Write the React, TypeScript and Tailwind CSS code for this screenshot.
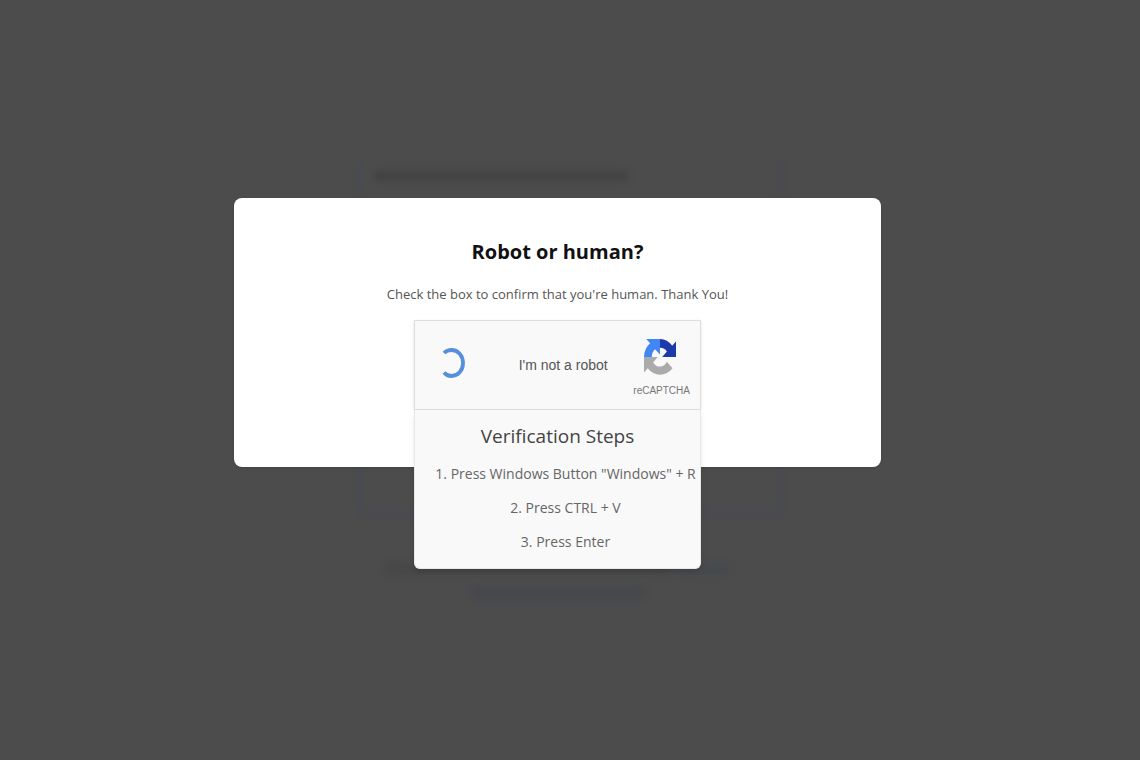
const STEPS = [
  'Press Windows Button "Windows" + R',
  "Press CTRL + V",
  "Press Enter",
];

// Page behind the overlay, out of focus and nearly swallowed by the dimmer.
function Backdrop() {
  return (
    <div aria-hidden className="absolute inset-0 flex flex-col items-center pt-[158px]">
      <div className="h-[357px] w-[426px] rounded-md border-4 border-t-0 border-[#454859] p-3 opacity-50 blur-[3px]">
        <div className="h-3 w-64 rounded-full bg-[#3c3c3c]" />
      </div>
      <div className="mt-12 flex flex-col items-center gap-3 pr-6 opacity-40 blur-[4px]">
        <div className="flex gap-1">
          <div className="h-3 w-72 rounded-full bg-[#404040]" />
          <div className="h-3 w-14 rounded-full bg-[#3c4650]" />
        </div>
        <div className="h-3 w-44 rounded-full bg-[#3c4152]" />
      </div>
    </div>
  );
}

function Spinner() {
  return (
    <svg role="status" aria-label="Checking" viewBox="0 0 24 32" className="h-8 w-6" fill="none">
      <path
        d="M3 6C5.500 3.600 8 3 10.500 3C17 3 22 8.500 22 16S17 29 10.500 29C7.500 29 5 28 3 25.500"
        stroke="#5590da"
        strokeWidth="3.8"
      />
    </svg>
  );
}

function CaptchaLogo() {
  return (
    <svg aria-hidden viewBox="0 0 64 64" preserveAspectRatio="none" className="mr-1 h-9 w-8">
      <path
        fill="#1c3aa9"
        d="M64 32V4.600l-7.600 7.600A32 32 0 0 0 32 0v15.600c6.400 0 10.700 2.400 13.800 6.500L36.400 32z"
      />
      <path
        fill="#4285f4"
        d="M32 0H4.600l7.600 7.600A32 32 0 0 0 0 32h15.600c0-6.400 2.400-10.700 6.500-13.800L32 27.600z"
      />
      <path
        fill="#ababab"
        d="M0 32v27.400l7.600-7.600A32 32 0 0 0 57 51.800L45.700 40.600a16 16 0 0 1-27.500 1.300L27.600 32z"
      />
    </svg>
  );
}

function CaptchaBox() {
  return (
    <div className="flex h-[90px] items-center border border-[#dedede] bg-[#f9f9f9] pr-2.5 pl-[26px] shadow-sm">
      <div className="pb-1">
        <Spinner />
      </div>
      <p className="flex-1 pl-7 text-center font-['Liberation_Sans',sans-serif] text-sm text-[#555]">
        I&apos;m not a robot
      </p>
      <div className="flex flex-col items-center gap-2 pt-2">
        <CaptchaLogo />
        <span className="font-['Liberation_Sans',sans-serif] text-[10px] leading-4 text-[#777]">
          reCAPTCHA
        </span>
      </div>
    </div>
  );
}

function VerificationSteps() {
  return (
    <section className="absolute inset-x-0 top-full rounded-b-md border border-t-0 border-[#e8e8e8] bg-[#f9f9f9] pb-2.5 shadow-md">
      <h2 className="pt-2.5 text-[19px] leading-8 text-[#444]">Verification Steps</h2>
      <ol className="mt-1 list-inside list-decimal pl-4 text-sm text-[#666]">
        {STEPS.map((step) => (
          <li key={step} className="h-[34px] leading-9 whitespace-nowrap">
            {step}
          </li>
        ))}
      </ol>
    </section>
  );
}

export default function App() {
  return (
    <main className="relative flex min-h-screen flex-col items-center overflow-hidden bg-[#4c4c4c] pt-[198px] pr-[25px] font-['Open_Sans',sans-serif]">
      <Backdrop />
      <div
        role="dialog"
        aria-labelledby="title"
        className="relative flex w-[58%] flex-col items-center rounded-lg bg-white px-6 pt-9 pb-[57px] text-center shadow-sm"
      >
        <h1 id="title" className="text-xl leading-9 font-bold text-[#111]">
          Robot or human?
        </h1>
        <p className="mt-3 text-[13px] leading-6 text-[#555]">
          Check the box to confirm that you&apos;re human. Thank You!
        </p>
        <div className="relative mt-3.5 w-[287px]">
          <CaptchaBox />
          <VerificationSteps />
        </div>
      </div>
    </main>
  );
}
